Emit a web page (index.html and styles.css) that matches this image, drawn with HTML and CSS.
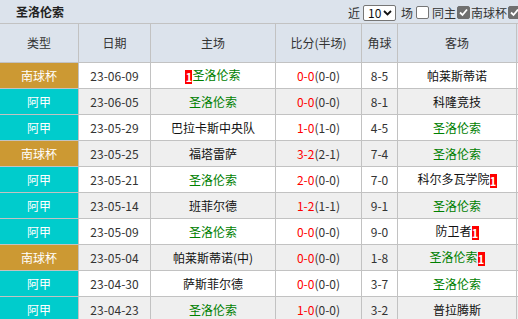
FILE: index.html
```html
<!DOCTYPE html>
<html lang="zh-CN">
<head>
<meta charset="utf-8">
<title>圣洛伦索</title>
<link rel="stylesheet" href="styles.css">
</head>
<body>
<div class="page">
  <div class="topbar">
    <span class="title">圣洛伦索</span>
    <div class="controls">
      <span class="lbl">近</span>
      <span class="select">10<svg class="chev" width="9" height="6" viewBox="0 0 9 6"><path d="M1 1 L4.5 4.5 L8 1" fill="none" stroke="#111" stroke-width="1.8"/></svg></span>
      <span class="lbl after-select">场</span>
      <span class="cb"></span>
      <span class="lbl">同主</span>
      <span class="cb checked"><svg width="11" height="11" viewBox="0 0 11 11"><path d="M2 5.5 L4.5 8 L9 2.5" fill="none" stroke="#fff" stroke-width="1.8"/></svg></span>
      <span class="lbl">南球杯</span>
      <span class="cb checked"><svg width="11" height="11" viewBox="0 0 11 11"><path d="M2 5.5 L4.5 8 L9 2.5" fill="none" stroke="#fff" stroke-width="1.8"/></svg></span>
    </div>
  </div>
  <table class="matches">
    <colgroup>
      <col class="c-type"><col class="c-date"><col class="c-home"><col class="c-score"><col class="c-corner"><col class="c-away"><col class="c-extra">
    </colgroup>
    <thead>
      <tr><th>类型</th><th>日期</th><th>主场</th><th>比分(半场)</th><th>角球</th><th>客场</th><th></th></tr>
    </thead>
    <tbody>
      <tr><td class="type cup">南球杯</td><td>23-06-09</td><td class="team"><span class="badge">1</span><span class="sls">圣洛伦索</span></td><td><span class="red">0-0</span>(0-0)</td><td>8-5</td><td class="team">帕莱斯蒂诺</td><td></td></tr>
      <tr class="alt"><td class="type lg">阿甲</td><td>23-06-05</td><td class="team"><span class="sls">圣洛伦索</span></td><td><span class="red">0-0</span>(0-0)</td><td>8-1</td><td class="team">科隆竞技</td><td></td></tr>
      <tr><td class="type lg">阿甲</td><td>23-05-29</td><td class="team">巴拉卡斯中央队</td><td><span class="red">1-0</span>(1-0)</td><td>4-5</td><td class="team"><span class="sls">圣洛伦索</span></td><td></td></tr>
      <tr class="alt"><td class="type cup">南球杯</td><td>23-05-25</td><td class="team">福塔雷萨</td><td><span class="red">3-2</span>(2-1)</td><td>7-4</td><td class="team"><span class="sls">圣洛伦索</span></td><td></td></tr>
      <tr><td class="type lg">阿甲</td><td>23-05-21</td><td class="team"><span class="sls">圣洛伦索</span></td><td><span class="red">2-0</span>(0-0)</td><td>7-0</td><td class="team">科尔多瓦学院<span class="badge">1</span></td><td></td></tr>
      <tr class="alt"><td class="type lg">阿甲</td><td>23-05-14</td><td class="team">班菲尔德</td><td><span class="red">1-2</span>(1-1)</td><td>9-1</td><td class="team"><span class="sls">圣洛伦索</span></td><td></td></tr>
      <tr><td class="type lg">阿甲</td><td>23-05-09</td><td class="team"><span class="sls">圣洛伦索</span></td><td><span class="red">0-0</span>(0-0)</td><td>9-0</td><td class="team">防卫者<span class="badge">1</span></td><td></td></tr>
      <tr class="alt"><td class="type cup">南球杯</td><td>23-05-04</td><td class="team">帕莱斯蒂诺(中)</td><td><span class="red">0-0</span>(0-0)</td><td>1-8</td><td class="team"><span class="sls">圣洛伦索</span><span class="badge">1</span></td><td></td></tr>
      <tr><td class="type lg">阿甲</td><td>23-04-30</td><td class="team">萨斯菲尔德</td><td><span class="red">0-0</span>(0-0)</td><td>3-7</td><td class="team"><span class="sls">圣洛伦索</span></td><td></td></tr>
      <tr class="alt"><td class="type lg">阿甲</td><td>23-04-23</td><td class="team"><span class="sls">圣洛伦索</span></td><td><span class="red">1-0</span>(0-0)</td><td>3-2</td><td class="team">普拉腾斯</td><td></td></tr>
    </tbody>
  </table>
</div>
</body>
</html>
```
FILE: styles.css
```css
html, body {
  margin: 0;
  padding: 0;
  overflow: hidden;
  background: #ffffff;
}
.page {
  width: 518px;
  overflow: hidden;
  font-family: "Noto Sans CJK SC", "Noto Sans", sans-serif;
  font-size: 12px;
  color: #333;
}
.topbar {
  width: 600px;
  height: 23px;
  background: #dce3ec;
  display: flex;
  align-items: center;
}
.title {
  font-weight: bold;
  color: #222;
  padding-left: 16px;
  line-height: 23px;
  font-size: 12px;
}
.controls {
  display: flex;
  align-items: center;
  margin-left: 284px;
  margin-top: 2px;
  color: #333;
}
.lbl {
  line-height: 16px;
  white-space: nowrap;
}
.select {
  display: inline-flex;
  align-items: center;
  box-sizing: border-box;
  width: 33px;
  height: 16px;
  margin-left: 3px;
  padding-left: 4px;
  border: 1px solid #767676;
  border-radius: 2px;
  background: #fff;
  color: #111;
  line-height: 14px;
}
.chev {
  margin-left: 2px;
}
.after-select {
  margin-left: 5px;
}
.cb {
  box-sizing: border-box;
  width: 13px;
  height: 13px;
  margin: 0 3px;
  border: 1px solid #767676;
  border-radius: 2px;
  background: #fff;
  display: inline-flex;
  align-items: center;
  justify-content: center;
}
.cb.checked {
  background: #6f6f6f;
  border-color: #6f6f6f;
  margin: 0 1px 0 1px;
}
.matches {
  width: 577px;
  table-layout: fixed;
  border-collapse: separate;
  border-spacing: 0;
  border-top: 1px solid #c2c2c2;
}
.c-type { width: 79px; }
.c-date { width: 72px; }
.c-home { width: 125px; }
.c-score { width: 86px; }
.c-corner { width: 36px; }
.c-away { width: 119px; }
.c-extra { width: 60px; }
.matches th, .matches td {
  box-sizing: border-box;
  padding: 0;
  text-align: center;
  white-space: nowrap;
  overflow: hidden;
  border-right: 1px solid #c2c2c2;
  border-bottom: 1px solid #c2c2c2;
  font-size: 12px;
  line-height: 16px;
}
.matches th {
  height: 39px;
  background: #dce3ec;
  font-weight: normal;
  color: #333;
}
.matches td {
  height: 26px;
  background: #ffffff;
  color: #333;
}
.matches tr.alt td {
  background: #efefef;
}
.matches td.team {
  color: #111;
}
.matches td.type {
  color: #fff;
}
.matches td.type.cup, .matches tr.alt td.type.cup {
  background: #cc9933;
}
.matches td.type.lg, .matches tr.alt td.type.lg {
  background: #00cccc;
}
.sls {
  color: #008000;
}
.red {
  color: #ff0000;
}
.badge {
  display: inline-block;
  width: 7px;
  height: 14px;
  background: #ff0000;
  color: #fff;
  font-weight: bold;
  font-size: 11px;
  line-height: 14px;
  text-align: center;
  vertical-align: -2px;
}
```
